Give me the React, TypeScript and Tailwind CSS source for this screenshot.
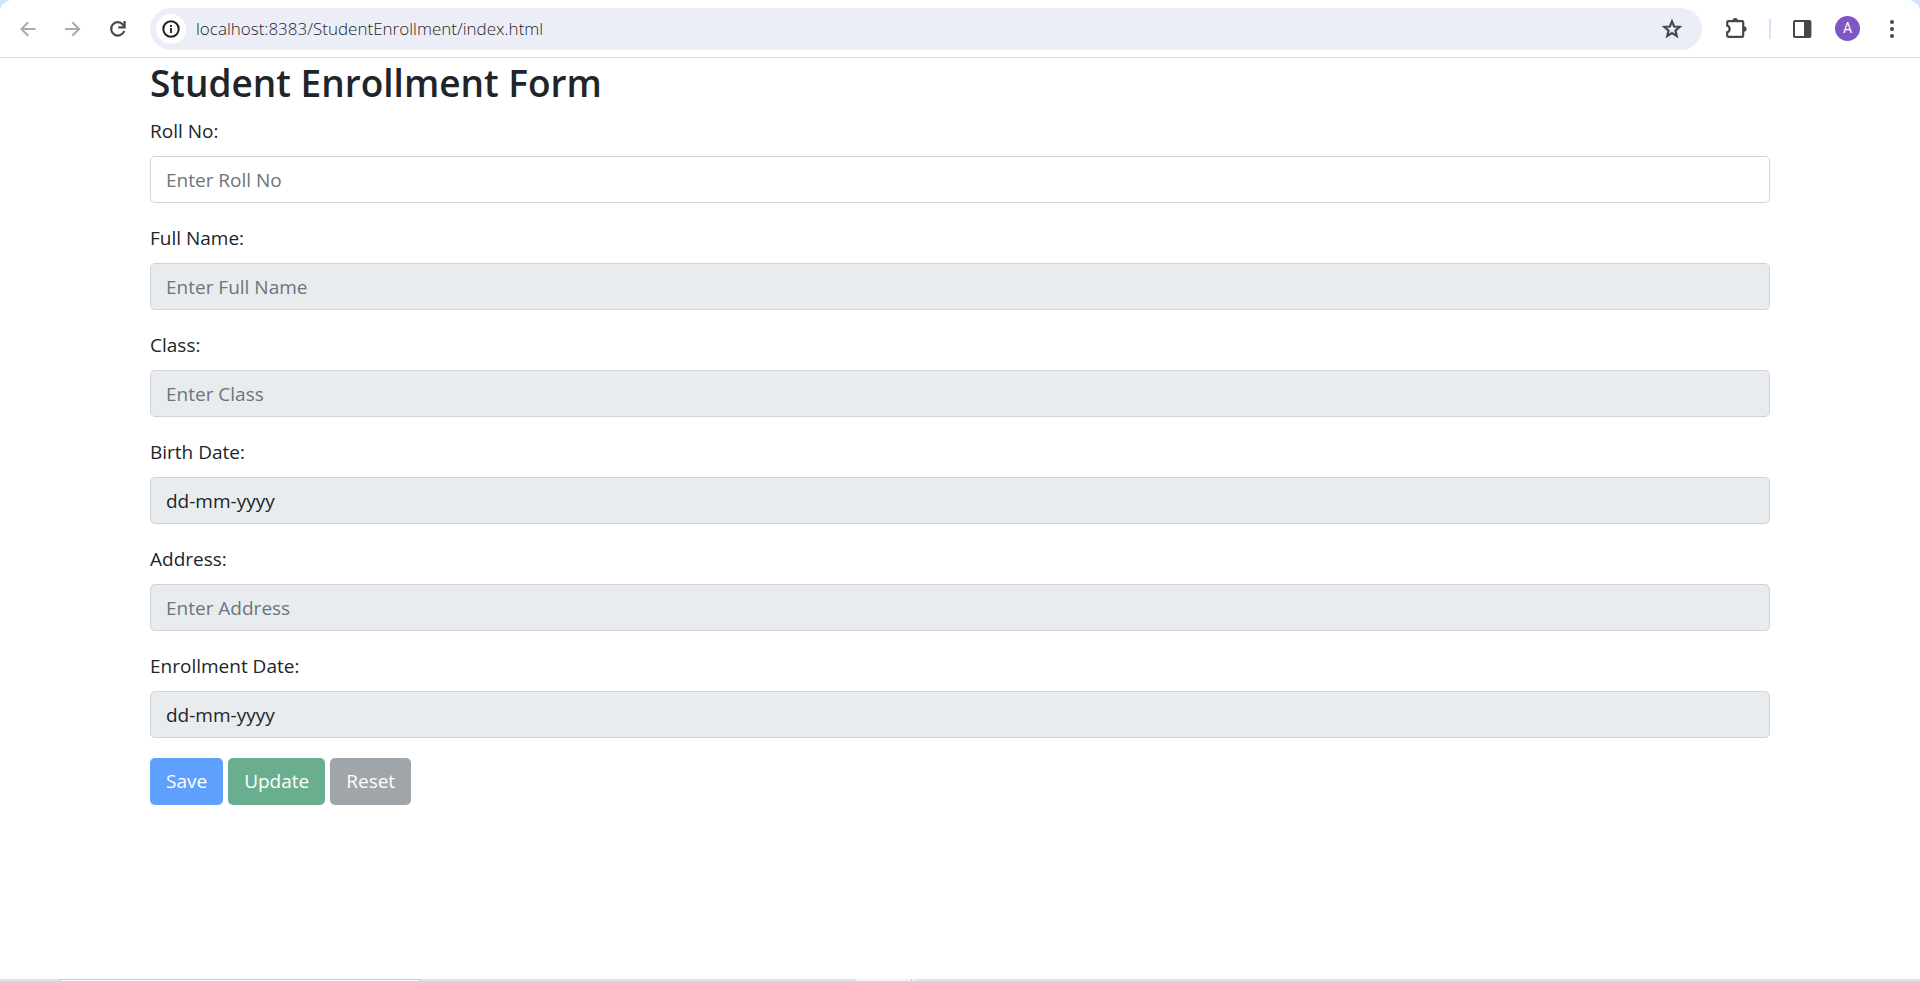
import type { ReactNode } from "react";

type Field = { id: string; label: string; placeholder: string; disabled?: boolean; date?: boolean };

const fields: Field[] = [
  { id: "roll-no", label: "Roll No:", placeholder: "Enter Roll No" },
  { id: "full-name", label: "Full Name:", placeholder: "Enter Full Name", disabled: true },
  { id: "class", label: "Class:", placeholder: "Enter Class", disabled: true },
  { id: "birth-date", label: "Birth Date:", placeholder: "dd-mm-yyyy", disabled: true, date: true },
  { id: "address", label: "Address:", placeholder: "Enter Address", disabled: true },
  { id: "enrollment-date", label: "Enrollment Date:", placeholder: "dd-mm-yyyy", disabled: true, date: true },
];

function IconButton({ label, className = "", children }: { label: string; className?: string; children: ReactNode }) {
  return (
    <button type="button" aria-label={label} className={`flex size-6 shrink-0 items-center justify-center ${className}`}>
      {children}
    </button>
  );
}

function Toolbar() {
  return (
    <div className="bg-[#d3e3fd]">
      <header className="flex h-[58px] items-center rounded-t-xl border-b border-[#dfe1e5] bg-white px-4 text-[#474747]">
        <div className="flex w-[134px] shrink-0 items-center gap-[21px]">
          <IconButton label="Back" className="text-[#ababab]">
            <svg viewBox="0 0 24 24" className="size-6" fill="currentColor"><path d="M19.5 11H7.83l5.09-5.09L11.5 4.5l-7.5 7.5 7.5 7.5 1.42-1.41L7.83 13H19.5v-2z" /></svg>
          </IconButton>
          <IconButton label="Forward" className="text-[#ababab]">
            <svg viewBox="0 0 24 24" className="size-6" fill="currentColor"><path d="M4 11h11.67l-5.09-5.09L12 4.5l7.5 7.5-7.5 7.5-1.42-1.41L15.67 13H4v-2z" /></svg>
          </IconButton>
          <IconButton label="Reload">
            <svg viewBox="0 0 24 24" className="size-6" fill="none" stroke="currentColor" strokeWidth="2.2"><path d="M18.2 14A6.7 6.7 0 1 1 16.9 7.4L18.3 9" /><path d="M18.6 4v6.3h-6.3" /></svg>
          </IconButton>
        </div>
        <div className="flex h-[42px] flex-1 items-center gap-[10px] rounded-full bg-[#ebeef7] pr-[18px] pl-[6px]">
          <button type="button" aria-label="View site information" className="flex size-[30px] shrink-0 items-center justify-center rounded-full bg-white text-[#1f1f1f]">
            <svg viewBox="0 0 18 18" className="size-[18px]" fill="none" stroke="currentColor" strokeWidth="2"><circle cx="9" cy="9" r="7.7" /><path d="M9 8v5M9 5v2" strokeWidth="1.8" /></svg>
          </button>
          <input aria-label="Address and search bar" defaultValue="localhost:8383/StudentEnrollment/index.html" className="min-w-0 flex-1 bg-transparent text-[17px] font-light text-[#262626] outline-none" />
          <IconButton label="Bookmark this tab">
            <svg viewBox="0 0 24 24" className="size-6" fill="none" stroke="currentColor" strokeWidth="2.2"><path d="M12 4.4l2.15 5.1 5.5.45-4.2 3.6 1.3 5.4L12 16.1l-4.75 2.85 1.3-5.4-4.2-3.6 5.5-.45z" /></svg>
          </IconButton>
        </div>
        <div className="flex shrink-0 items-center gap-5 pl-[23px]">
          <IconButton label="Extensions">
            <svg viewBox="0 0 24 24" className="size-6"><path d="M3.2 4.2H17.2Q18.2 4.2 18.2 5.2V18.8Q18.2 19.8 17.2 19.8H3.2Q2.2 19.8 2.2 18.8V15.4C5.4 14.4 5.4 9.6 2.2 8.6V5.2Q2.2 4.2 3.2 4.2Z" fill="none" stroke="currentColor" strokeWidth="2.2" /><path d="M7.4 3.8a2.8 2.8 0 0 1 5.6 0ZM18.8 9.2a2.8 2.8 0 0 1 0 5.6Z" fill="currentColor" /></svg>
          </IconButton>
          <div className="h-5 w-[2px] bg-[#d3e3fd]" />
          <IconButton label="Side panel">
            <svg viewBox="0 0 24 24" className="size-6"><rect x="3" y="4" width="16.4" height="16" rx="1" fill="none" stroke="currentColor" strokeWidth="2" /><path d="M13 4h6v16h-6z" fill="currentColor" /></svg>
          </IconButton>
          <button type="button" aria-label="Profile" className="flex size-[25px] items-center justify-center rounded-full bg-[#7e57c2] font-[Roboto] text-[14px] text-white">A</button>
          <IconButton label="Menu">
            <svg viewBox="0 0 24 24" className="size-6" fill="currentColor"><circle cx="12" cy="5" r="2" /><circle cx="12" cy="12" r="2" /><circle cx="12" cy="19" r="2" /></svg>
          </IconButton>
        </div>
      </header>
    </div>
  );
}

export default function App() {
  const button = "h-[47px] rounded-[5px] px-4 text-[19px] text-white";
  return (
    <div className="flex min-h-screen flex-col bg-white font-['Open_Sans','Noto_Sans',sans-serif] text-[#212529]">
      <Toolbar />
      <main className="w-full flex-1 px-[150px]">
        <h1 className="mb-2 text-[37px] leading-[50px] font-semibold">Student Enrollment Form</h1>
        <form onSubmit={(e) => e.preventDefault()}>
          {fields.map((f) => (
            <div key={f.id} className="mb-5">
              <label htmlFor={f.id} className="mb-[10px] block w-fit text-[19px] leading-[30px]">{f.label}</label>
              <input
                id={f.id}
                type="text"
                placeholder={f.placeholder}
                disabled={f.disabled}
                className={`block h-[47px] w-full rounded-[5px] border border-[#ced4da] bg-white px-[15px] text-[19px] disabled:bg-[#e9ecef] ${f.date ? "placeholder:text-[#212529]" : "placeholder:text-[#6c757d]"}`}
              />
            </div>
          ))}
          <div className="flex gap-[5px]">
            <button type="submit" disabled className={`${button} bg-[#5fa0ff]`}>Save</button>
            <button type="button" disabled className={`${button} bg-[#69af8f]`}>Update</button>
            <button type="reset" disabled className={`${button} bg-[#a0a5aa]`}>Reset</button>
          </div>
        </form>
      </main>
      <footer className="flex h-[2px] bg-[#d0e7f0]">
        <div className="ml-[60px] w-[360px] border border-b-0 border-[#c8cbd0] bg-white" />
        <div className="ml-[436px] w-14 border-r border-[#b9ccd6] bg-[#edf5f9]" />
        <div className="w-1 bg-[#e2f0f6]" />
      </footer>
    </div>
  );
}
